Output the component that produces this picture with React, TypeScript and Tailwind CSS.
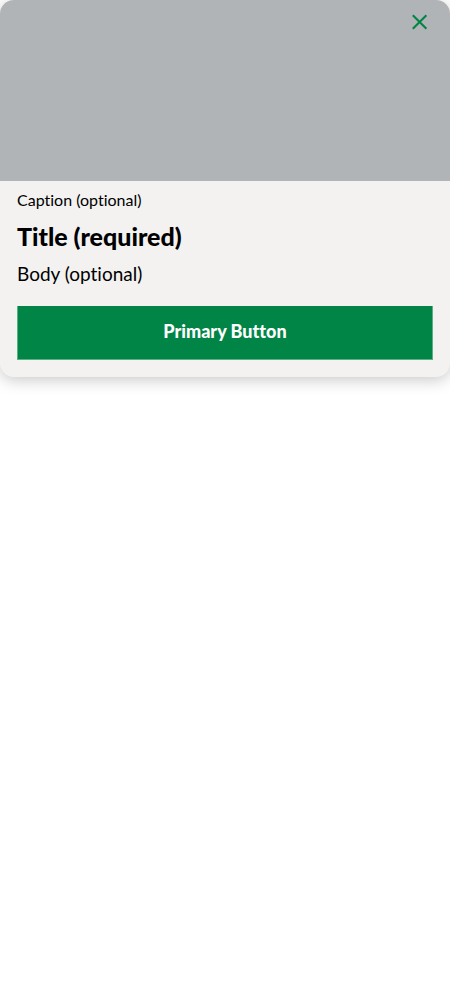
export default function App() {
  return (
    <main className="min-h-screen bg-white font-['Lato','Liberation_Sans',sans-serif] text-black [font-variant-ligatures:none]">
      <article className="overflow-hidden rounded-[14px] bg-[#f3f2f1] shadow-[0_3px_16px_rgba(0,0,0,0.22)]">
        <div className="flex h-[181px] items-start justify-end bg-[#b1b4b6]">
          <button type="button" aria-label="Close" className="mt-1 mr-3 flex size-9 items-center justify-center text-[#008547]">
            <svg viewBox="0 0 16 16" className="size-4" fill="none" stroke="currentColor" strokeWidth="2.1">
              <path d="M.8 1.2 14.4 14.8M14.4 1.2 .8 14.8" />
            </svg>
          </button>
        </div>
        <div className="flex flex-col px-[17px] pt-[9px] pb-[17px]">
          <p className="text-base leading-5">Caption (optional)</p>
          <h2 className="mt-3 text-[25px] leading-7 font-black">Title (required)</h2>
          <p className="mt-3 text-[19px] leading-6">Body (optional)</p>
          <button type="button" className="mt-5 h-[54px] border-x border-b border-[#57b183] bg-[#008547] pb-1 text-lg font-black text-white">
            Primary Button
          </button>
        </div>
      </article>
    </main>
  );
}
